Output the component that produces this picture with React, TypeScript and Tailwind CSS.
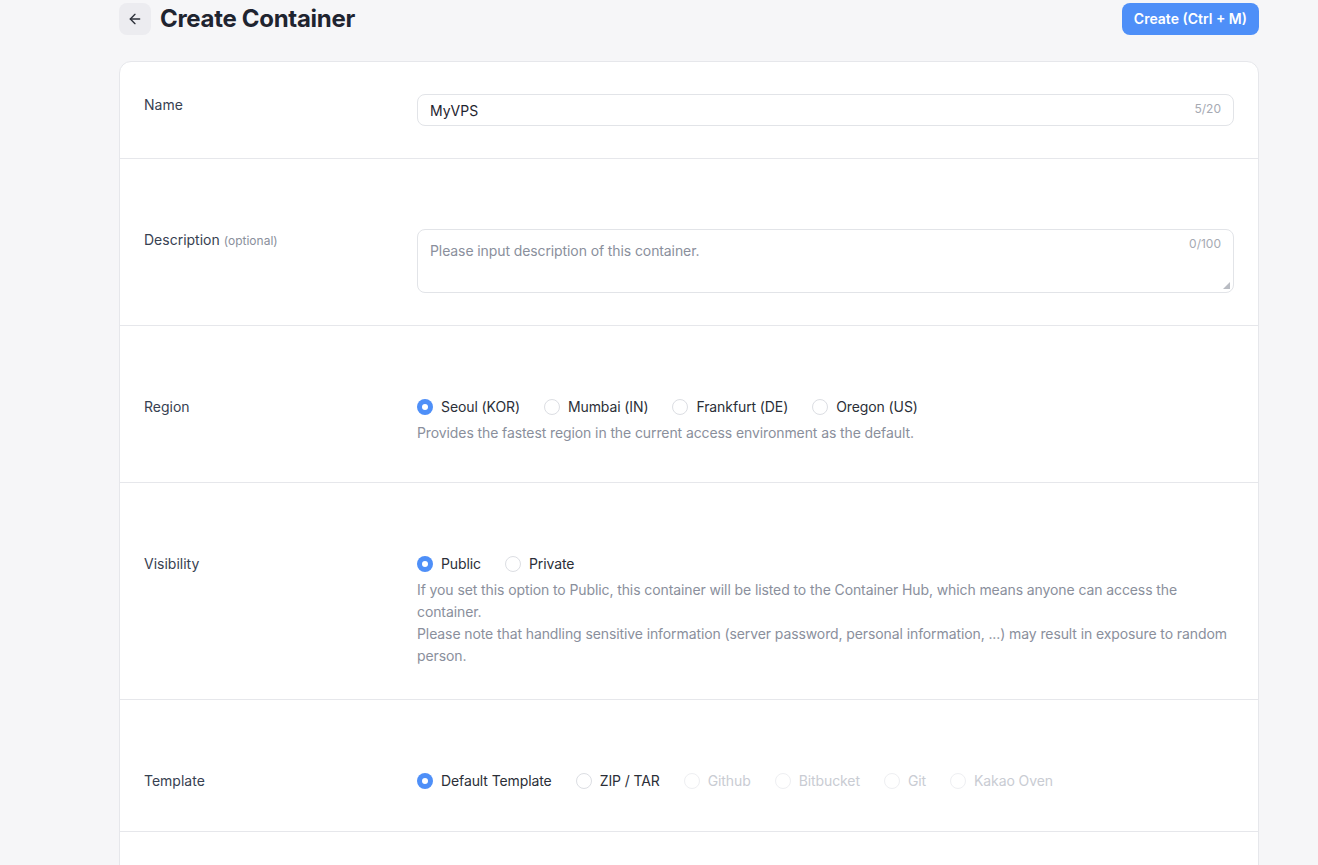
import { ArrowLeft } from "lucide-react";

type Opt = { label: string; checked?: boolean; disabled?: boolean };

const Radio = ({ label, checked, disabled }: Opt) => (
  <label className="flex items-center gap-2">
    {checked ? (
      <span className="flex h-4 w-4 items-center justify-center rounded-full bg-[#4e8ff8]">
        <span className="h-[6px] w-[6px] rounded-full bg-white" />
      </span>
    ) : (
      <span
        className={
          disabled
            ? "h-4 w-4 rounded-full border border-[#eeeff2] bg-white"
            : "h-4 w-4 rounded-full border border-[#dcdee3] bg-white"
        }
      />
    )}
    <span className={disabled ? "text-[#c9ccd3]" : "text-[#2b2f38]"}>{label}</span>
  </label>
);

const RadioGroup = ({ options }: { options: Opt[] }) => (
  <div className="flex h-[22px] items-center gap-6 text-sm leading-5 tracking-[-0.1px]">
    {options.map((o) => (
      <Radio key={o.label} {...o} />
    ))}
  </div>
);

const Row = ({
  label,
  hint,
  pad,
  children,
}: {
  label: string;
  hint?: string;
  pad: string;
  children: React.ReactNode;
}) => (
  <div className={`flex border-b border-[#e6e7eb] px-6 ${pad}`}>
    <div className="w-[273px] shrink-0 pt-px text-sm leading-5 text-[#374151]">
      {label}
      {hint && <span className="ml-1 text-xs text-[#8a8f9c]">{hint}</span>}
    </div>
    <div className="flex-1">{children}</div>
  </div>
);

const Help = ({ children }: { children: React.ReactNode }) => (
  <p className="mt-1 text-sm leading-[22px] tracking-[-0.1px] text-[#8a8f9c]">{children}</p>
);

export default function App() {
  return (
    <div
      className="min-h-screen bg-[#f6f6f8] pt-[3px]"
      style={{ fontFamily: "Inter, 'Noto Sans', sans-serif" }}
    >
      <div className="ml-[119px] w-[1140px]">
        <div className="flex h-8 items-center justify-between">
          <div className="flex items-center gap-[9px]">
            <button className="flex h-8 w-8 items-center justify-center rounded-lg bg-[#ececf0] text-[#2b2f38]">
              <ArrowLeft size={16} strokeWidth={2} />
            </button>
            <h1 className="text-2xl font-bold tracking-[-0.3px] text-[#1f2430]">Create Container</h1>
          </div>
          <button className="h-8 rounded-lg bg-[#4e8ff8] px-3 text-sm font-semibold text-white">
            Create (Ctrl + M)
          </button>
        </div>

        <div className="mt-[26px] rounded-xl border border-[#e6e7eb] bg-white">
          <Row label="Name" pad="py-8">
            <div className="flex h-8 items-center justify-between rounded-lg border border-[#e2e4e8] px-3">
              <span className="pt-px text-sm text-[#1f2430]">MyVPS</span>
              <span className="-mt-0.5 text-xs text-[#a6aab3]">5/20</span>
            </div>
          </Row>

          <Row label="Description" hint="(optional)" pad="pt-[70px] pb-8">
            <div className="relative h-16 rounded-lg border border-[#e2e4e8] px-3 pt-2">
              <span className="text-sm tracking-[-0.1px] text-[#8a8f9c]">
                Please input description of this container.
              </span>
              <span className="absolute right-3 top-[6px] text-xs text-[#a6aab3]">0/100</span>
              <svg className="absolute bottom-[3px] right-[3px]" width="7" height="7" viewBox="0 0 7 7">
                <path d="M7 0 L7 7 L0 7 Z" fill="#b9bcc3" />
              </svg>
            </div>
          </Row>

          <Row label="Region" pad="pt-[70px] pb-[38px]">
            <RadioGroup
              options={[
                { label: "Seoul (KOR)", checked: true },
                { label: "Mumbai (IN)" },
                { label: "Frankfurt (DE)" },
                { label: "Oregon (US)" },
              ]}
            />
            <Help>Provides the fastest region in the current access environment as the default.</Help>
          </Row>

          <Row label="Visibility" pad="pt-[70px] pb-8">
            <RadioGroup options={[{ label: "Public", checked: true }, { label: "Private" }]} />
            <Help>
              If you set this option to Public, this container will be listed to the Container Hub, which means
              anyone can access the container.
              <br />
              Please note that handling sensitive information (server password, personal information, ...) may
              result in exposure to random person.
            </Help>
          </Row>

          <Row label="Template" pad="pt-[70px] pb-[39px]">
            <RadioGroup
              options={[
                { label: "Default Template", checked: true },
                { label: "ZIP / TAR" },
                { label: "Github", disabled: true },
                { label: "Bitbucket", disabled: true },
                { label: "Git", disabled: true },
                { label: "Kakao Oven", disabled: true },
              ]}
            />
          </Row>
          <div className="h-24" />
        </div>
      </div>
    </div>
  );
}
